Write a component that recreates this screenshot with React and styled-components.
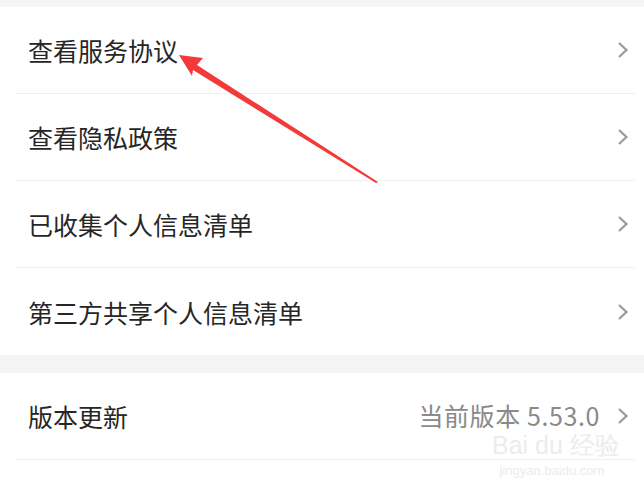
import React from 'react'
import styled, { createGlobalStyle } from 'styled-components'

const GlobalStyle = createGlobalStyle`
  html, body {
    margin: 0;
    padding: 0;
    background: #ffffff;
  }
  body {
    font-family: "Noto Sans CJK SC", "Noto Sans", sans-serif;
  }
`

const Page = styled.div`
  position: relative;
  width: 644px;
  height: 488px;
  overflow: hidden;
  background: #f5f5f5;
  padding-top: 7px;
  box-sizing: border-box;
`

const Section = styled.div`
  background: #ffffff;
  margin-bottom: ${p => p.gap || 0}px;
`

const Row = styled.div`
  display: flex;
  align-items: center;
  height: 87px;
  box-sizing: border-box;
  margin-left: 16px;
  margin-right: 9px;
  padding-left: 12px;
  padding-right: 6px;
  border-bottom: ${p => p.last ? 'none' : '1px solid #efefef'};
`

const Label = styled.div`
  flex: 1;
  font-size: 25px;
  color: #262626;
`

const Value = styled.div`
  font-size: 25px;
  line-height: 1.1;
  color: #8a8a8a;
  letter-spacing: 0.6px;
  margin-right: 17px;
`

const Filler = styled.div`
  background: #ffffff;
  height: 40px;
`

const Overlay = styled.svg`
  position: absolute;
  left: 0;
  top: 0;
  pointer-events: none;
`

const Watermark = styled.div`
  position: absolute;
  left: 492px;
  top: 433px;
  width: 120px;
  color: #ececec;
  font-family: "Liberation Sans", sans-serif;
  text-align: center;
  line-height: 1;
`

const MarkTop = styled.div`
  font-size: 25px;
  white-space: nowrap;
`

const MarkBottom = styled.div`
  font-size: 13px;
  margin-top: 6px;
`

const Chevron = () => (
  <svg width='12' height='18' viewBox='0 0 12 18'>
    <path d='M2 2 L9.5 9 L2 16' fill='none' stroke='#9a9a9a' strokeWidth='2.2' />
  </svg>
)

const items = ['查看服务协议', '查看隐私政策', '已收集个人信息清单', '第三方共享个人信息清单']

export default function App () {
  return (
    <Page>
      <GlobalStyle />
      <Section gap={18}>
        {items.map((t, i) => (
          <Row key={t} last={i === items.length - 1}>
            <Label>{t}</Label>
            <Chevron />
          </Row>
        ))}
      </Section>
      <Section>
        <Row>
          <Label>版本更新</Label>
          <Value>当前版本 5.53.0</Value>
          <Chevron />
        </Row>
      </Section>
      <Filler />
      <Watermark>
        <MarkTop>Bai du 经验</MarkTop>
        <MarkBottom>jingyan.baidu.com</MarkBottom>
      </Watermark>
      <Overlay width='644' height='488'>
        <polygon points='179,55 203,58 197,65 378,182 376,183 193,70 192,76' fill='#f33a3a' />
      </Overlay>
    </Page>
  )
}
